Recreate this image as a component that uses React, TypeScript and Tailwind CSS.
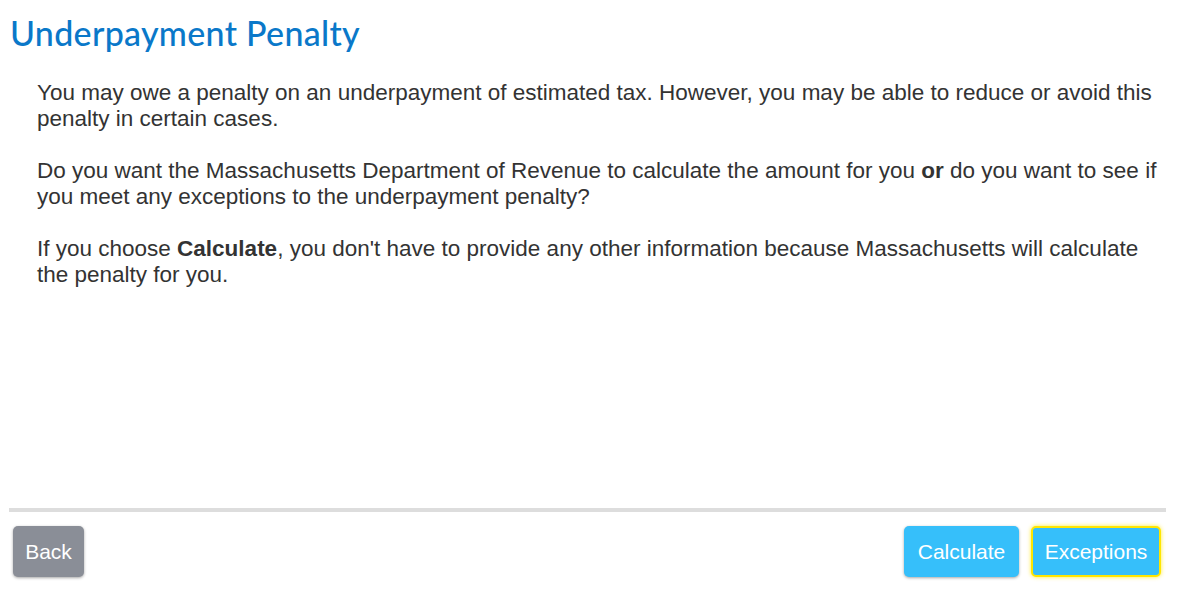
export default function App() {
  return (
    <div className="flex h-[595px] w-full flex-col bg-white font-['Liberation_Sans',Arial,sans-serif] text-[22.5px] leading-[26px] text-[#333333]">
      {/* Title */}
      <h1 className="ml-[10px] mt-[13px] font-['Lato','Noto_Sans',sans-serif] text-[34px] leading-[40px] font-medium tracking-[0.3px] text-[#0a78c9]">
        Underpayment Penalty
      </h1>

      {/* Body */}
      <div className="mt-[27px] flex flex-col gap-[26px] pl-[37px] pr-[15px]">
        <p>
          You may owe a penalty on an underpayment of estimated tax. However, you may be able to reduce or avoid this
          penalty in certain cases.
        </p>
        <p>
          Do you want the Massachusetts Department of Revenue to calculate the amount for you <b>or</b> do you want to
          see if you meet any exceptions to the underpayment penalty?
        </p>
        <p>
          If you choose <b>Calculate</b>, you don't have to provide any other information because Massachusetts will
          calculate the penalty for you.
        </p>
      </div>

      <div className="flex-1" />

      {/* Footer */}
      <div className="ml-[9px] mr-[20px] h-[4px] bg-[#dddddd]" />
      <div className="flex items-center justify-between pl-[13px] pr-[25px] pt-[14px] pb-[18px] text-[21px]">
        <button className="h-[51px] w-[71px] rounded-[5px] bg-[#8a8e97] text-white shadow-[0_1px_3px_rgba(0,0,0,0.35)]">
          Back
        </button>
        <div className="flex gap-[12px]">
          <button className="h-[51px] w-[115px] rounded-[5px] bg-[#36bffa] text-white shadow-[0_1px_3px_rgba(0,0,0,0.35)]">
            Calculate
          </button>
          <button className="h-[51px] w-[130px] rounded-[5px] border-2 border-[#ffe600] bg-[#36bffa] text-white shadow-[0_0_4px_rgba(255,230,0,0.8)]">
            Exceptions
          </button>
        </div>
      </div>
    </div>
  );
}
